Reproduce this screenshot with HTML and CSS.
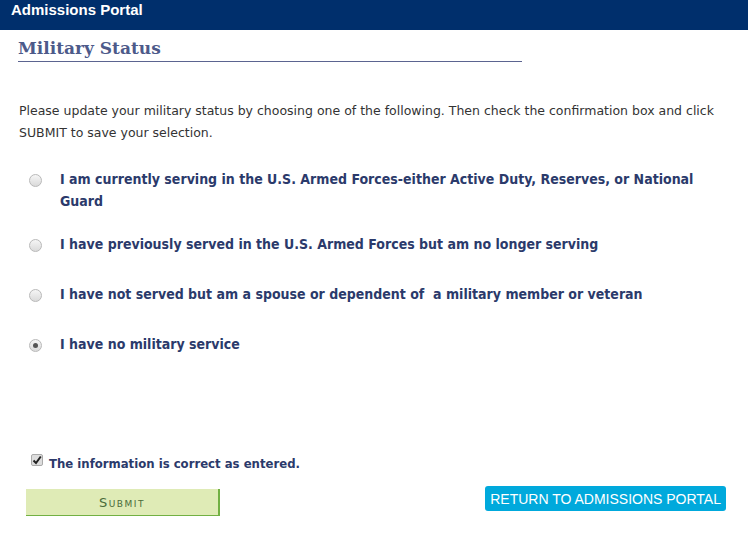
FILE: index.html
```html
<!DOCTYPE html>
<html>
<head>
<meta charset="utf-8">
<link rel="stylesheet" href="styles.css">
</head>
<body>
<header class="topbar">Admissions Portal</header>
<main class="content">
  <h1 class="title">Military Status</h1>
  <p class="intro">Please update your military status by choosing one of the following. Then check the confirmation box and click SUBMIT to save your selection.</p>
  <ul class="options">
    <li class="option"><span class="radio"></span><span class="label">I am currently serving in the U.S. Armed Forces-either Active Duty, Reserves, or National Guard</span></li>
    <li class="option"><span class="radio"></span><span class="label">I have previously served in the U.S. Armed Forces but am no longer serving</span></li>
    <li class="option"><span class="radio"></span><span class="label">I have not served but am a spouse or dependent of&nbsp; a military member or veteran</span></li>
    <li class="option"><span class="radio checked"></span><span class="label">I have no military service</span></li>
  </ul>
  <div class="confirm"><span class="checkbox"><svg width="10" height="10" viewBox="0 0 10 10"><path d="M1.5 5.5 L4 8 L8.8 1.5" fill="none" stroke="#222" stroke-width="2"/></svg></span><span class="confirm-label">The information is correct as entered.</span></div>
  <div class="actions">
    <button class="submit">Submit</button>
    <button class="return">RETURN TO ADMISSIONS PORTAL</button>
  </div>
</main>
</body>
</html>
```
FILE: styles.css
```css
html, body { margin: 0; padding: 0; background: #fff; }
body { font-family: "DejaVu Sans Condensed", "DejaVu Sans", sans-serif; }
.topbar {
  height: 30px;
  background: #002f6c;
  color: #fff;
  font-family: "Liberation Sans", Arial, sans-serif;
  font-weight: bold;
  font-size: 15px;
  line-height: 20px;
  padding-left: 11px;
  box-sizing: border-box;
}
.content { padding: 0 22px 0 18px; }
.title {
  margin: 6px 0 0 0;
  width: 504px;
  font-family: "DejaVu Serif", "Liberation Serif", serif;
  font-weight: bold;
  font-size: 17px;
  color: #4d5a8a;
  line-height: 24px;
  padding-bottom: 1px;
  border-bottom: 1px solid #5b6490;
}
.intro {
  margin: 38px 0 0 1px;
  font-family: "DejaVu Sans", sans-serif;
  font-size: 12.5px;
  line-height: 22px;
  color: #333;
}
.options { list-style: none; margin: 28px 0 0 0; padding: 0; }
.option { display: flex; align-items: flex-start; margin-bottom: 32px; }
.option:first-child { margin-bottom: 25px; }
.radio {
  flex: none;
  width: 13px; height: 13px;
  border: 1px solid #b9b9b9;
  border-radius: 50%;
  background: linear-gradient(#f6f6f6, #dadada);
  margin: 2px 0 0 11px;
  box-sizing: border-box;
  display: flex; align-items: center; justify-content: center;
}
.radio.checked::after {
  content: ""; width: 5px; height: 5px; border-radius: 50%; background: #555;
}
.label {
  margin-left: 18px;
  font-weight: bold;
  font-size: 14px;
  line-height: 22px;
  color: #2b3a6b;
  margin-top: -4px;
}
.confirm { display: flex; align-items: center; margin-top: 101px; margin-left: 13px; }
.checkbox {
  width: 12px; height: 12px; border: 1px solid #aaa; border-radius: 2px;
  background: #ddd; display: flex; align-items: center; justify-content: center;
  box-sizing: border-box; margin-top: -8px;
}
.confirm-label { margin-left: 6px; font-weight: bold; font-size: 13px; color: #2b3a6b; }
.actions { display: flex; justify-content: space-between; align-items: flex-start; margin-top: 15px; margin-left: 8px; }
.submit {
  width: 194px; height: 27px;
  background: #dfebb6;
  border: none;
  border-right: 2px solid #72b043;
  border-bottom: 1px solid #72b043;
  color: #4a6b3a;
  font-family: "DejaVu Sans", sans-serif;
  font-variant: small-caps;
  font-size: 13px;
  letter-spacing: 1.5px;
  padding: 0;
  margin-top: 3px;
}
.return {
  height: 25px;
  padding: 0 5px;
  background: #00a9dc;
  border: none;
  border-radius: 3px;
  color: #fff;
  font-family: "Liberation Sans", Arial, sans-serif;
  font-size: 14px;
}
```
